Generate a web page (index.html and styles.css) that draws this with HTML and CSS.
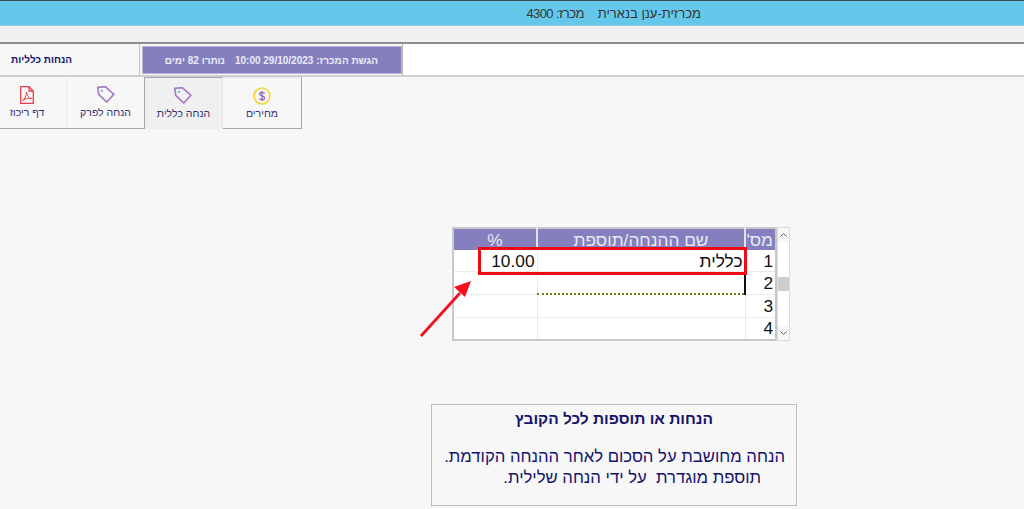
FILE: index.html
```html
<!DOCTYPE html>
<html lang="he" dir="rtl">
<head>
  <meta charset="UTF-8" />
  <meta name="viewport" content="width=device-width, initial-scale=1.0"/>
  <title>הנחות כלליות</title>
  <link rel="stylesheet" href="styles.css">
</head>
<body>
<div class="title-bar">
  <span>מכרזית-ענן בנארית</span>
  <span class="title-num">מכרז: 4300</span>
</div>
<div class="strip"></div>

<div class="tab-row">
  <div class="tab-blank"></div>
  <div class="tab-info">
    <span>הגשת המכרז: 29/10/2023 10:00</span>
    <span>נותרו 82 ימים</span>
  </div>
  <div class="tab-label">הנחות כלליות</div>
</div>

<div class="toolbar">
  <div class="tool tool-prices">
    <svg width="18" height="18" viewBox="0 0 20 20">
      <circle cx="10" cy="10" r="8.800" fill="none" stroke="#f5d42e" stroke-width="1.700"/>
      <path d="M13 7.200C12.400 6.200 11.300 5.900 10 5.900C8.400 5.900 7.200 6.700 7.200 7.900C7.200 10.600 12.900 9.300 12.900 12.100C12.900 13.300 11.600 14.100 10 14.100C8.600 14.100 7.500 13.700 7 12.700M10 4.400V15.600" fill="none" stroke="#9a6cb8" stroke-width="1.500"/>
    </svg>
    <span>מחירים</span>
  </div>
  <div class="tool tool-active">
    <svg width="18" height="18" viewBox="0 0 20 20">
      <path d="M.8 1.500L9.200 .8L18.800 9.200L11 17.800L1.900 9.200Z" fill="none" stroke="#a67cc4" stroke-width="1.900" stroke-linejoin="round"/>
      <circle cx="5.500" cy="5.300" r="1.500" fill="#8fc0cc"/>
    </svg>
    <span>הנחה כללית</span>
  </div>
  <div class="tool tool-part">
    <svg width="18" height="18" viewBox="0 0 20 20">
      <path d="M.8 1.500L9.200 .8L18.800 9.200L11 17.800L1.900 9.200Z" fill="none" stroke="#a67cc4" stroke-width="1.900" stroke-linejoin="round"/>
      <circle cx="5.500" cy="5.300" r="1.500" fill="#8fc0cc"/>
    </svg>
    <span>הנחה לפרק</span>
  </div>
  <div class="tool tool-pdf">
    <svg width="14" height="18" viewBox="0 0 14 18">
      <path d="M.7 .7H9L13.300 5V17.300H.7Z M9 .7V5H13.300" fill="none" stroke="#e8404a" stroke-width="1.300"/>
      <path d="M2.800 14.500C4.800 13 6.300 9.500 6.600 6C7.100 9.500 8.800 12 11.500 12.500C8.800 12 5.300 12.700 2.800 14.500Z" fill="none" stroke="#e8404a" stroke-width="1"/>
    </svg>
    <span>דף ריכוז</span>
  </div>
</div>

<div class="grid-wrap">
  <div class="scrollbar">
    <svg class="scroll-btn" width="11" height="14" viewBox="0 0 11 14"><path d="M2.500 8.500L5.500 5.500L8.500 8.500" fill="none" stroke="#606060"/></svg>
    <div class="scroll-track"><div class="scroll-thumb"></div></div>
    <svg class="scroll-btn" width="11" height="14" viewBox="0 0 11 14"><path d="M2.500 5.500L5.500 8.500L8.500 5.500" fill="none" stroke="#606060"/></svg>
  </div>
  <table class="grid">
    <thead>
      <tr>
        <th class="col-num">מס'</th>
        <th class="col-name">שם ההנחה/תוספת</th>
        <th class="col-pct">%</th>
      </tr>
    </thead>
    <tbody>
      <tr>
        <td>1</td>
        <td>כללית</td>
        <td>10.00</td>
      </tr>
      <tr>
        <td>2</td>
        <td class="cell-current"></td>
        <td></td>
      </tr>
      <tr>
        <td>3</td>
        <td></td>
        <td></td>
      </tr>
      <tr>
        <td>4</td>
        <td></td>
        <td></td>
      </tr>
    </tbody>
  </table>
</div>

<div class="note">
  <h2>הנחות או תוספות לכל הקובץ</h2>
  <p>הנחה מחושבת על הסכום לאחר ההנחה הקודמת.<span class="note-line">תוספת מוגדרת&nbsp; על ידי הנחה שלילית.</span></p>
</div>

<!-- red annotation on top of the grid -->
<div class="mark-box"></div>
<svg class="mark-arrow" width="70" height="70" viewBox="0 0 70 70">
  <path d="M2 64L41 21" stroke="#f4101c" stroke-width="2.800" fill="none"/>
  <path d="M52 9L46 25L35 15Z" fill="#f4101c"/>
</svg>
</body>
</html>
```

FILE: styles.css
```css
html, body {
  margin: 0;
  height: 509px;
  overflow: hidden;
}

body {
  position: relative;
  background: #f7f7f7;
  font-family: "Liberation Sans", sans-serif;
  color: #1a1a7a;
}

.title-bar {
  height: 24px;
  border-top: 1px solid #3a4a58;
  border-bottom: 1px solid #9cc8dc;
  background: #65c8eb;
  display: flex;
  align-items: center;
  gap: 14px;
  padding-right: 323px;
  font-size: 13px;
  color: #333;
}

.title-num {
  letter-spacing: -0.6px;
}

.strip {
  height: 16px;
  background: #f0f0f0;
}

.tab-row {
  display: flex;
  height: 31px;
  border-top: 2px solid #8c8c8c;
  border-bottom: 2px solid #cfcfcf;
}

.tab-blank {
  flex: 1;
  background: white;
  border-left: 1px solid #b8b8b8;
}

.tab-info {
  width: 260px;
  margin: 2px 0 1px 0;
  background: #8480c0;
  border: 1px solid #b4b4dc;
  box-sizing: border-box;
  display: flex;
  align-items: center;
  gap: 10px;
  padding-right: 23px;
  font-size: 10px;
  font-weight: bold;
  color: #ebebf5;
  white-space: nowrap;
}

.tab-label {
  width: 140px;
  margin-right: 2px;
  border-right: 1px solid #c4c4c4;
  display: flex;
  align-items: center;
  padding-right: 67px;
  box-sizing: border-box;
  font-size: 10px;
  font-weight: bold;
  color: #14146e;
  white-space: nowrap;
}

.toolbar {
  display: flex;
  height: 51px;
  margin: 0 722px 0 0;
  border-bottom: 1px solid #a8a8a8;
  border-right: 1px solid #a8a8a8;
  width: 301px;
}

.tool {
  flex: none;
  width: 78px;
  display: flex;
  flex-direction: column;
  align-items: center;
  padding-top: 9px;
  gap: 2px;
  box-sizing: border-box;
  font-size: 10.500px;
  white-space: nowrap;
  color: #34307e;
}

.tool-active {
  width: 79px;
  background: #f0f0f0;
  border-top: 1px solid #a8a8a8;
  border-left: 1px solid #a8a8a8;
  border-right: 1px solid #e4e4e4;
  margin-bottom: -1px;
}

.tool-active svg {
  margin-left: -2px;
}

.tool-prices {
  border-top: 1px solid #e4e4e4;
}

.tool-part {
  border-left: 1px solid #ececec;
}

.grid-wrap {
  display: flex;
  width: 338px;
  height: 114px;
  margin: 98px 234px 0 0;
}

.grid {
  width: 325px;
  height: 114px;
  box-sizing: border-box;
  border: 2px solid #c8c8c8;
  border-collapse: collapse;
  table-layout: fixed;
  background: white;
  font-size: 17.300px;
  color: #111;
}

.grid th {
  box-sizing: border-box;
  height: 22px;
  padding: 0 2px;
  background: #8480c0;
  border-left: 2px solid #e2e2f0;
  color: #e8e8f4;
  font-weight: normal;
  line-height: 18px;
}

.col-num {
  width: 31px;
}

.col-name {
  width: 208px;
}

.grid th.col-num {
  text-align: right;
}

.grid td {
  height: 21px;
  padding: 0 2px;
  border-left: 1px solid #ececec;
  border-bottom: 1px solid #ececec;
  line-height: 20px;
  text-align: right;
}

.grid td:last-child, .grid th:last-child {
  border-left: none;
}

.grid td.cell-current {
  border-right: 2px solid #111;
  border-bottom: 2px dotted #7f7f10;
}

.scrollbar {
  flex: none;
  width: 13px;
  height: 114px;
  box-sizing: border-box;
  display: flex;
  flex-direction: column;
  background: #f7f7f7;
  border: 1px solid #dcdcdc;
}

.scroll-btn {
  flex: none;
}

.scroll-track {
  flex: 1;
  background: white;
  padding-top: 35px;
}

.scroll-thumb {
  height: 14px;
  background: #cdcdcd;
}

.note {
  width: 366px;
  height: 102px;
  margin: 63px 227px 0 0;
  box-sizing: border-box;
  border: 1px solid #bcbcbc;
  padding-top: 5px;
  color: #14146e;
}

.note h2 {
  margin: 0;
  font-size: 15.500px;
  line-height: 18px;
  text-align: center;
}

.note p {
  margin: 18px 11px 0 0;
  font-size: 16.700px;
  line-height: 21px;
}

.note-line {
  display: block;
  margin-right: 24px;
}

.mark-box {
  position: absolute;
  left: 478px;
  top: 247px;
  width: 263px;
  height: 22px;
  border: 3px solid #f00814;
}

.mark-arrow {
  position: absolute;
  left: 419px;
  top: 272px;
}
```
